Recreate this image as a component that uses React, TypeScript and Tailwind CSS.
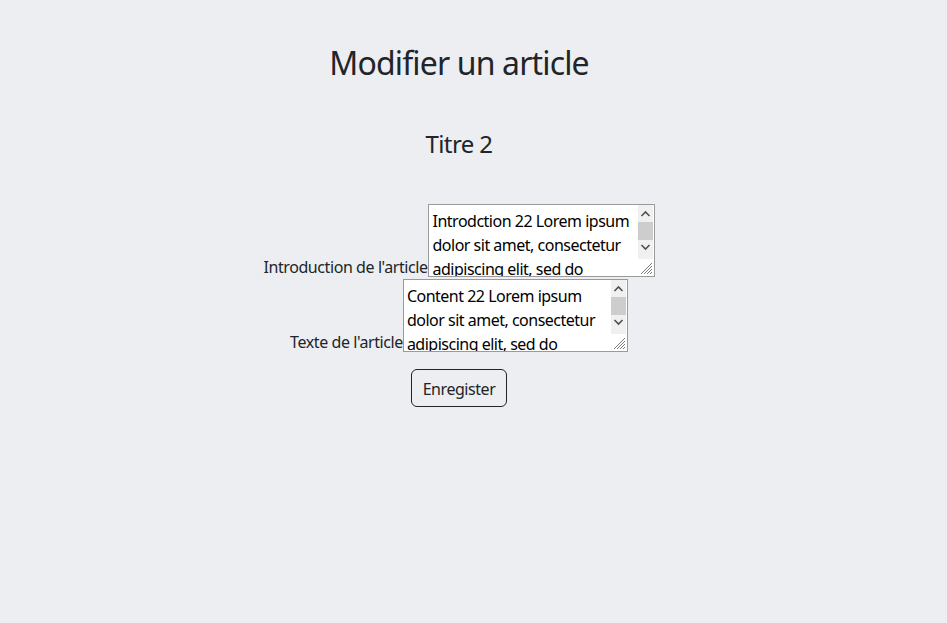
import React from "react";

const intro =
  "Introdction 22 Lorem ipsum dolor sit amet, consectetur adipiscing elit, sed do eiusmod tempor incididunt ut labore et dolore magna aliqua.";
const content =
  "Content 22 Lorem ipsum dolor sit amet, consectetur adipiscing elit, sed do eiusmod tempor incididunt ut labore et dolore magna aliqua.";

function FakeScroll() {
  return (
    <>
      <div className="pointer-events-none absolute right-[2px] top-[1px] w-[15px] h-[54px] bg-[#f0f0f0] flex flex-col items-center">
        <svg width="15" height="17" viewBox="0 0 15 17" className="shrink-0">
          <path d="M3.5 11 L7.5 7 L11.5 11" fill="none" stroke="#505050" strokeWidth="1.6" />
        </svg>
        <div className="w-[15px] h-[18px] bg-[#cdcdcd]" />
        <svg width="15" height="17" viewBox="0 0 15 17" className="shrink-0 -mt-[1px]">
          <path d="M3.5 6 L7.5 10 L11.5 6" fill="none" stroke="#505050" strokeWidth="1.6" />
        </svg>
      </div>
      <svg
        width="14"
        height="14"
        viewBox="0 0 14 14"
        className="pointer-events-none absolute right-[2px] bottom-[2px]"
      >
        <path d="M13 2 L2 13 M13 5 L5 13 M13 8 L8 13 M13 11 L11 13" stroke="#7a7a7a" strokeWidth="1" />
      </svg>
    </>
  );
}

export default function App() {
  return (
    <div
      className="min-h-[623px] w-full bg-[#eceef1] text-[#212529]"
      style={{ fontFamily: '"Noto Sans", "Open Sans", sans-serif' }}
    >
      <div className="w-[918px] flex flex-col items-center pt-[39px]">
        <h1 className="text-[32px] leading-[48px] font-normal tracking-[-0.85px]">Modifier un article</h1>
        <h2 className="mt-[39px] text-[24px] leading-[36px] font-normal tracking-[-0.6px]">Titre 2</h2>
        <form className="mt-[42px] flex flex-col items-center">
          <div className="flex items-end">
            <label htmlFor="intro" className="text-[16px] leading-[24px] mb-[-2px] tracking-[-0.42px]">
              Introduction de l'article
            </label>
            <div className="relative">
              <textarea
                id="intro"
                defaultValue={intro}
                className="block w-[227px] h-[73px] border border-[#9a9a9a] bg-white pl-[4px] pr-[18px] pt-[4px] text-[16px] leading-[24px] text-black overflow-hidden resize-none tracking-[-0.5px]"
              />
              <FakeScroll />
            </div>
          </div>
          <div className="flex items-end mt-[2px]">
            <label htmlFor="content" className="text-[16px] leading-[24px] mb-[-2px] tracking-[-0.42px]">
              Texte de l'article
            </label>
            <div className="relative">
              <textarea
                id="content"
                defaultValue={content}
                className="block w-[225px] h-[73px] border border-[#9a9a9a] bg-white pl-[3px] pr-[18px] pt-[4px] text-[16px] leading-[24px] text-black overflow-hidden resize-none tracking-[-0.5px]"
              />
              <FakeScroll />
            </div>
          </div>
          <button
            type="button"
            className="mt-[17px] h-[38px] px-[11px] pt-[1px] rounded-[6px] border border-[#212529] text-[16px] leading-[24px] text-[#212529] bg-transparent tracking-[-0.45px]"
          >
            Enregister
          </button>
        </form>
      </div>
    </div>
  );
}
